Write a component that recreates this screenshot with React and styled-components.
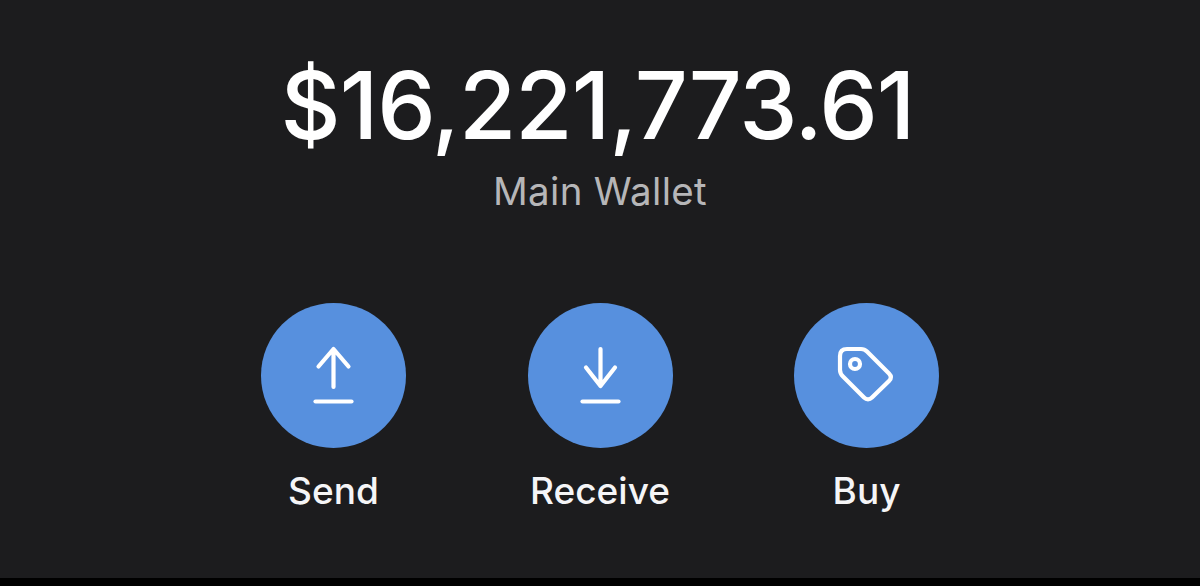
import React from "react";
import styled, { createGlobalStyle } from "styled-components";

const Global = createGlobalStyle`
  html, body { margin: 0; padding: 0; background: #000; }
  body { font-family: "Inter", "Liberation Sans", sans-serif; }
`;

const Screen = styled.main`
  width: 1200px;
  height: 578px;
  background: #1c1c1e;
  display: flex;
  flex-direction: column;
  align-items: center;
  padding-top: 55px;
  box-sizing: border-box;
`;

const Amount = styled.h1`
  margin: 0 5px 0 0;
  font-size: 93px;
  line-height: 100px;
  font-weight: 450;
  letter-spacing: -1px;
  color: #fff;
  white-space: nowrap;
`;

const WalletName = styled.p`
  margin: 14px 0 0;
  font-size: 38.5px;
  line-height: 44px;
  font-weight: 400;
  letter-spacing: 0.3px;
  color: #b6b6b8;
`;

const Actions = styled.div`
  display: grid;
  grid-template-columns: repeat(3, 266.5px);
  margin-top: 90px;
`;

const Action = styled.button`
  display: flex;
  flex-direction: column;
  align-items: center;
  gap: 21px;
  padding: 0;
  border: 0;
  background: none;
  font: inherit;
  color: #fff;
`;

const Circle = styled.span`
  width: 145px;
  height: 145px;
  border-radius: 50%;
  background: #5790de;
  display: flex;
  align-items: center;
  justify-content: center;
`;

const Label = styled.span`
  font-size: 37px;
  line-height: 44px;
  font-weight: 500;
  color: #f5f5f7;
`;

const Icon = ({ children }) => (
  <svg width="145" height="145" viewBox="0 0 145 145" fill="none" stroke="#fff" strokeWidth="4.2" strokeLinecap="round" strokeLinejoin="round">
    {children}
  </svg>
);

const SendIcon = () => (
  <Icon>
    <path d="M72.5 84V46M57.5 63.5L72.5 46L87.5 63.5" />
    <path d="M54.5 98.5H90.5" />
  </Icon>
);

const ReceiveIcon = () => (
  <Icon>
    <path d="M72.5 46V83M58 64.5L72.5 83L87 64.5" />
    <path d="M54.5 98.5H90.5" />
  </Icon>
);

const BuyIcon = () => (
  <Icon>
    <path d="M46 53C46 48 49 46 53 46H67C69.5 46 71.5 47 73 48.5L95 70.5C97.5 73 97.5 75.5 95 78L78 94.5C75.5 97 72.5 97 70 94.5L49 73.5C47 71.5 46 69.5 46 67Z" />
    <circle cx="61" cy="61" r="5" />
  </Icon>
);

const items = [
  { label: "Send", icon: <SendIcon /> },
  { label: "Receive", icon: <ReceiveIcon /> },
  { label: "Buy", icon: <BuyIcon /> },
];

export default function App() {
  return (
    <>
      <Global />
      <Screen>
        <Amount>$16,221,773.61</Amount>
        <WalletName>Main Wallet</WalletName>
        <Actions>
          {items.map((item) => (
            <Action key={item.label}>
              <Circle>{item.icon}</Circle>
              <Label>{item.label}</Label>
            </Action>
          ))}
        </Actions>
      </Screen>
    </>
  );
}
